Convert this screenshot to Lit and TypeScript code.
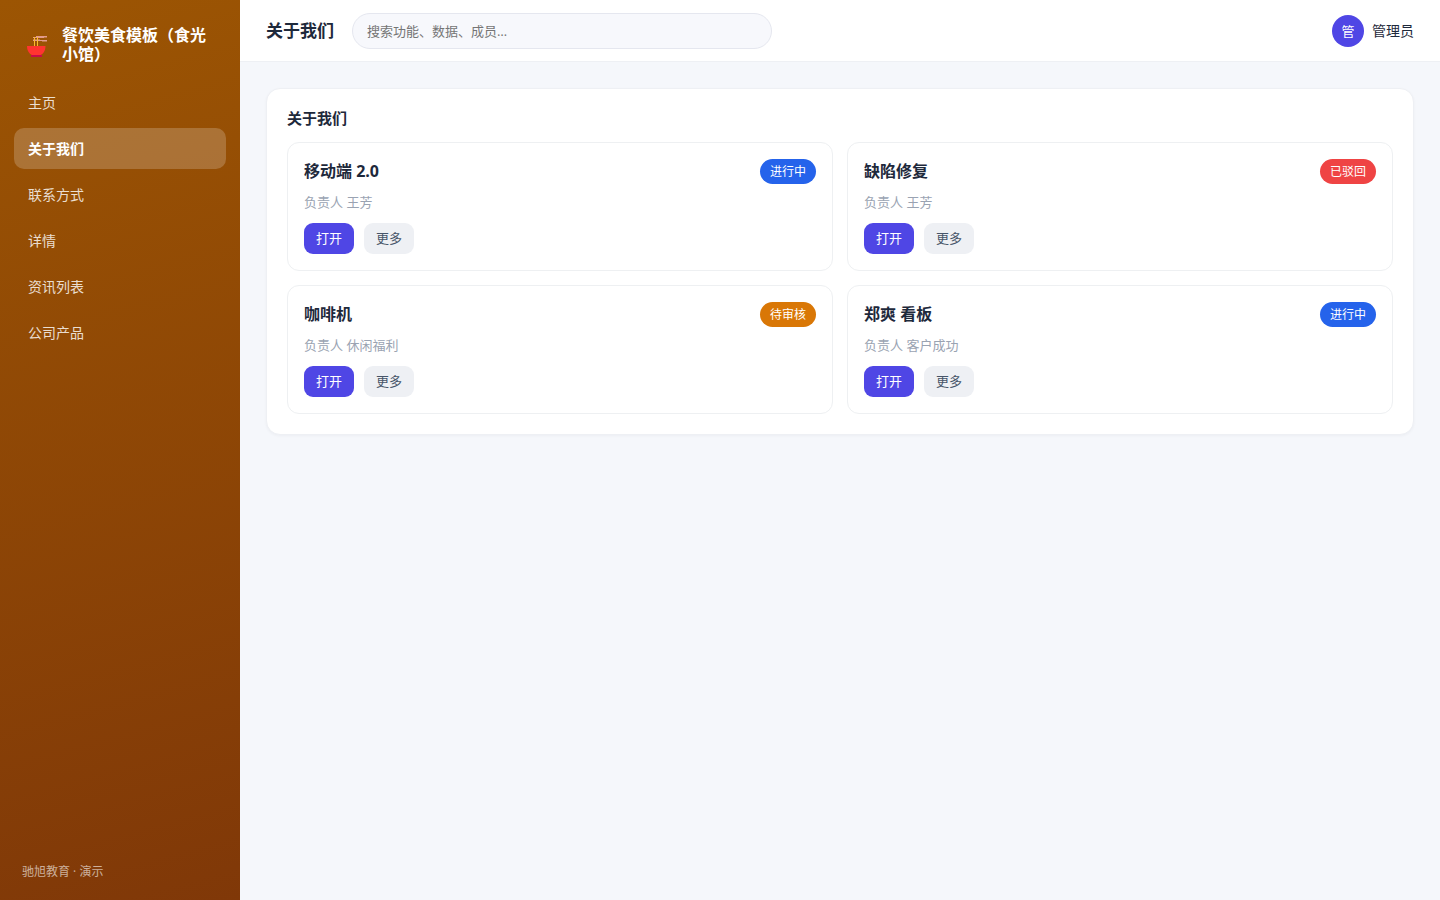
import { LitElement, html, css, svg } from "lit";
import { customElement, state } from "lit/decorators.js";

interface Item {
  title: string;
  owner: string;
  status: string;
  tone: "info" | "danger" | "warn";
}

const NAV = ["主页", "关于我们", "联系方式", "详情", "资讯列表", "公司产品"];

const ITEMS: Item[] = [
  { title: "移动端 2.0", owner: "王芳", status: "进行中", tone: "info" },
  { title: "缺陷修复", owner: "王芳", status: "已驳回", tone: "danger" },
  { title: "咖啡机", owner: "休闲福利", status: "待审核", tone: "warn" },
  { title: "郑爽 看板", owner: "客户成功", status: "进行中", tone: "info" },
];

const noodles = svg`
  <path d="M7 4 L10 4 V3 H21 V4.500 H18 V5 H7 Z M7 6.500 H14 V7 H21 V8.500 H16 V8 H7 Z" fill="#e39b8c"/>
  <path d="M8.500 4 V14 M11.500 4 V14" stroke="#fcb92c" stroke-width="1" fill="none"/>
  <path d="M1 13 H19.500 C19.500 18 17 21 14.500 22 H6 C3.500 21 1 18 1 13 Z" fill="#ff3430"/>
  <path d="M5 22 H16 V24 H5 Z" fill="#c90a48"/>`;

@customElement("app-root")
export class AppRoot extends LitElement {
  @state() private current = "关于我们";

  static styles = css`
    :host {
      display: grid;
      grid-template-columns: 240px minmax(0, 1fr);
      min-height: 100vh;
      background: #f5f7fb;
      color: #1e293b;
      font-family: "Open Sans", "Noto Sans CJK SC", sans-serif;
      font-size: 14px;
      line-height: 20px;
    }
    *, *::before, *::after { box-sizing: border-box; }
    h1, h2, h3, p { margin: 0; }
    button, input { font: inherit; }
    .sidebar {
      display: flex;
      flex-direction: column;
      padding: 26px 14px 18px;
      background: linear-gradient(165deg, #9c5503, #803808);
      color: #fff;
    }
    .brand {
      display: flex;
      align-items: center;
      gap: 14px;
      padding: 0 12px;
      margin-bottom: 18px;
      font-size: 16px;
      font-weight: 700;
      line-height: 19px;
    }
    .logo { flex: none; width: 22px; height: 24px; }
    .nav { display: flex; flex-direction: column; gap: 5px; }
    .link {
      padding: 10px 14px;
      border-radius: 10px;
      line-height: 21px;
      color: rgba(255, 255, 255, 0.82);
      text-decoration: none;
    }
    .link.active {
      background: rgba(255, 255, 255, 0.2);
      color: #fff;
      font-weight: 700;
    }
    .foot {
      margin-top: auto;
      padding: 0 8px;
      font-size: 12px;
      color: rgba(255, 255, 255, 0.6);
    }
    .topbar {
      display: flex;
      align-items: center;
      gap: 18px;
      height: 62px;
      padding: 0 26px;
      background: #fff;
      border-bottom: 1px solid #eef0f4;
    }
    .page-title { font-size: 17px; line-height: 25px; }
    .search {
      flex: 0 1 420px;
      min-width: 0;
      height: 36px;
      padding: 0 14px;
      border: 1px solid #e5e7ef;
      border-radius: 18px;
      background: #f7f8fc;
      color: inherit;
      font-size: 13px;
    }
    .search::placeholder { color: #757575; }
    .user { display: flex; align-items: center; gap: 8px; margin-left: auto; }
    .avatar {
      display: grid;
      place-items: center;
      width: 32px;
      height: 32px;
      border-radius: 50%;
      background: #4f46e5;
      color: #fff;
      font-size: 13px;
    }
    .content { padding: 26px; }
    .panel {
      padding: 20px;
      border: 1px solid #eef0f4;
      border-radius: 14px;
      background: #fff;
      box-shadow: 0 1px 3px rgba(15, 23, 42, 0.04);
    }
    .panel-title { margin-bottom: 14px; font-size: 15px; line-height: 19px; }
    .grid {
      display: grid;
      grid-template-columns: repeat(2, minmax(0, 1fr));
      gap: 14px;
    }
    .card { padding: 16px; border: 1px solid #eef0f2; border-radius: 12px; }
    .head { display: flex; align-items: center; justify-content: space-between; }
    .name { font-size: 16px; line-height: 25px; }
    .badge {
      padding: 0 10px;
      border-radius: 13px;
      color: #fff;
      font-size: 12px;
      line-height: 25px;
    }
    .info { background: #2563eb; }
    .danger { background: #ef4444; }
    .warn { background: #d97706; }
    .owner { margin: 8px 0 11px; font-size: 13px; color: #9aa3b2; }
    .actions { display: flex; gap: 10px; }
    .btn {
      padding: 0 12px;
      border: 0;
      border-radius: 9px;
      background: #eef0f4;
      color: #475569;
      font-size: 13px;
      line-height: 31px;
      cursor: pointer;
    }
    .btn.primary { background: #4f46e5; color: #fff; }
  `;

  private go(e: Event, name: string) {
    e.preventDefault();
    this.current = name;
  }

  private card(item: Item) {
    return html`
      <article class="card">
        <div class="head">
          <h3 class="name">${item.title}</h3>
          <span class="badge ${item.tone}">${item.status}</span>
        </div>
        <p class="owner">负责人 ${item.owner}</p>
        <div class="actions">
          <button class="btn primary" type="button">打开</button>
          <button class="btn" type="button">更多</button>
        </div>
      </article>`;
  }

  render() {
    return html`
      <aside class="sidebar">
        <div class="brand">
          <svg class="logo" viewBox="0 0 22 24" aria-hidden="true">${noodles}</svg>
          <span>餐饮美食模板（食光小馆）</span>
        </div>
        <nav class="nav">
          ${NAV.map((n) => html`<a
            class="link ${n === this.current ? "active" : ""}"
            href="#"
            @click=${(e: Event) => this.go(e, n)}
          >${n}</a>`)}
        </nav>
        <div class="foot">驰旭教育 · 演示</div>
      </aside>
      <div>
        <header class="topbar">
          <h1 class="page-title">${this.current}</h1>
          <input class="search" type="search" aria-label="搜索" placeholder="搜索功能、数据、成员…" />
          <div class="user"><span class="avatar">管</span><span>管理员</span></div>
        </header>
        <main class="content">
          <section class="panel">
            <h2 class="panel-title">${this.current}</h2>
            <div class="grid">${ITEMS.map((i) => this.card(i))}</div>
          </section>
        </main>
      </div>`;
  }
}
